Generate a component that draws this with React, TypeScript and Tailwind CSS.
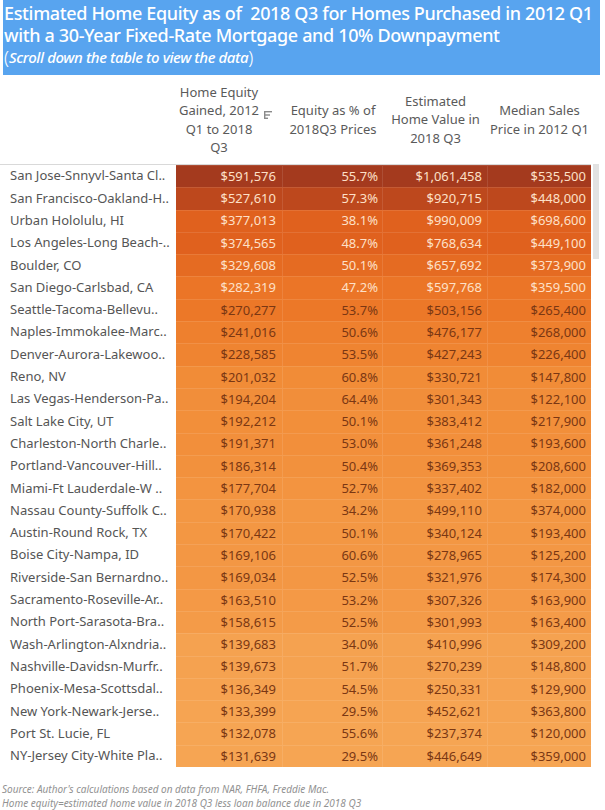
import React from "react"

type Row = [string, number, string, string, string]

const rows: Row[] = [
    ["San Jose-Snnyvl-Santa Cl..", 591576, "55.7%", "$1,061,458", "$535,500"],
    ["San Francisco-Oakland-H..", 527610, "57.3%", "$920,715", "$448,000"],
    ["Urban Hololulu, HI", 377013, "38.1%", "$990,009", "$698,600"],
    ["Los Angeles-Long Beach-..", 374565, "48.7%", "$768,634", "$449,100"],
    ["Boulder, CO", 329608, "50.1%", "$657,692", "$373,900"],
    ["San Diego-Carlsbad, CA", 282319, "47.2%", "$597,768", "$359,500"],
    ["Seattle-Tacoma-Bellevu..", 270277, "53.7%", "$503,156", "$265,400"],
    ["Naples-Immokalee-Marc..", 241016, "50.6%", "$476,177", "$268,000"],
    ["Denver-Aurora-Lakewoo..", 228585, "53.5%", "$427,243", "$226,400"],
    ["Reno, NV", 201032, "60.8%", "$330,721", "$147,800"],
    ["Las Vegas-Henderson-Pa..", 194204, "64.4%", "$301,343", "$122,100"],
    ["Salt Lake City, UT", 192212, "50.1%", "$383,412", "$217,900"],
    ["Charleston-North Charle..", 191371, "53.0%", "$361,248", "$193,600"],
    ["Portland-Vancouver-Hill..", 186314, "50.4%", "$369,353", "$208,600"],
    ["Miami-Ft Lauderdale-W ..", 177704, "52.7%", "$337,402", "$182,000"],
    ["Nassau County-Suffolk C..", 170938, "34.2%", "$499,110", "$374,000"],
    ["Austin-Round Rock, TX", 170422, "50.1%", "$340,124", "$193,400"],
    ["Boise City-Nampa, ID", 169106, "60.6%", "$278,965", "$125,200"],
    ["Riverside-San Bernardno..", 169034, "52.5%", "$321,976", "$174,300"],
    ["Sacramento-Roseville-Ar..", 163510, "53.2%", "$307,326", "$163,900"],
    ["North Port-Sarasota-Bra..", 158615, "52.5%", "$301,993", "$163,400"],
    ["Wash-Arlington-Alxndria..", 139683, "34.0%", "$410,996", "$309,200"],
    ["Nashville-Davidsn-Murfr..", 139673, "51.7%", "$270,239", "$148,800"],
    ["Phoenix-Mesa-Scottsdal..", 136349, "54.5%", "$250,331", "$129,900"],
    ["New York-Newark-Jerse..", 133399, "29.5%", "$452,621", "$363,800"],
    ["Port St. Lucie, FL", 132078, "55.6%", "$237,374", "$120,000"],
    ["NY-Jersey City-White Pla..", 131639, "29.5%", "$446,649", "$359,000"],
]

// orange sequential ramp, light -> dark
const stops: [number, number[]][] = [
    [0, [246, 165, 83]],
    [0.15, [241, 140, 55]],
    [0.3, [236, 120, 40]],
    [0.53, [224, 97, 30]],
    [0.86, [189, 72, 29]],
    [1, [164, 58, 30]],
]

const MIN = 131639
const MAX = 591576

const colorFor = (v: number) => {
    const t = (v - MIN) / (MAX - MIN)
    for (let i = 1; i < stops.length; i++) {
        const [t1, c1] = stops[i]
        const [t0, c0] = stops[i - 1]
        if (t <= t1) {
            const k = (t - t0) / (t1 - t0)
            const c = c0.map((x, j) => Math.round(x + (c1[j] - x) * k))
            return `rgb(${c[0]},${c[1]},${c[2]})`
        }
    }
    return "rgb(164,58,30)"
}

const fmt = (v: number) => "$" + v.toLocaleString("en-US")

const SortIcon = () => (
    <svg width="8" height="10" viewBox="0 0 8 10" className="shrink-0">
        <rect x="0" y="1" width="1.4" height="8" fill="#8a8a8a" />
        <rect x="0" y="1" width="8" height="1.4" fill="#8a8a8a" />
        <rect x="0" y="4.3" width="6" height="1.4" fill="#8a8a8a" />
        <rect x="0" y="7.6" width="4" height="1.4" fill="#8a8a8a" />
    </svg>
)

const App = () => {
    return (
        <div
            className="relative w-[605px] h-[810px] bg-white overflow-hidden"
            style={{ fontFamily: '"Noto Sans", "Open Sans", sans-serif' }}
        >
            {/* Title banner */}
            <div className="ml-[3px] w-[597px] h-[75px] bg-[#58a4ef] text-white pl-[1px] pt-[2px]">
                <div className="text-[18px] leading-[22px] font-medium tracking-[-0.35px]">
                    Estimated Home Equity as of&nbsp; 2018 Q3 for Homes Purchased in 2012 Q1
                </div>
                <div className="text-[18px] leading-[22px] font-medium tracking-[-0.35px]">
                    with a 30-Year Fixed-Rate Mortgage and 10% Downpayment
                </div>
                <div className="flex items-center h-[22px]">
                    <span className="text-[18px] leading-[22px] font-light">(</span>
                    <span className="text-[15px] leading-[20px] italic font-medium tracking-[-0.4px]">Scroll down the table to view the data</span>
                    <span className="text-[18px] leading-[22px] font-light">)</span>
                </div>
            </div>

            {/* Column headers */}
            <div className="flex items-center h-[89px] text-[13px] leading-[18.5px] text-[#5a5a5a]">
                <div className="w-[176px]" />
                <div className="w-[107px] flex items-center pl-[2px]">
                    <div className="w-[82px] text-center">Home Equity Gained, 2012 Q1 to 2018 Q3</div>
                    <div className="ml-[4px] -mt-[10px]"><SortIcon /></div>
                </div>
                <div className="w-[100px] text-center">Equity as % of 2018Q3 Prices</div>
                <div className="w-[105px] text-center px-[4px]">Estimated Home Value in 2018 Q3</div>
                <div className="w-[103px] text-center">Median Sales Price in 2012 Q1</div>
            </div>

            {/* Table */}
            <div className="w-[591px] border-t border-[#d9d9d9] text-[13px]">
                {rows.map(([name, eq, pct, val, price], i) => {
                    const light = eq > 275000
                    return (
                        <div key={i} className="flex h-[22.3px] items-center">
                            <div className="w-[176px] pl-[10px] text-[#555] whitespace-nowrap overflow-hidden">{name}</div>
                            <div
                                className={`flex flex-1 h-full border-t border-white/10 ${light ? "text-[#fde0c8]" : "text-[#7a3713]"}`}
                                style={{ backgroundColor: colorFor(eq) }}
                            >
                                <div className="w-[107px] flex items-center justify-end pr-[6px] border-r border-white/10">{fmt(eq)}</div>
                                <div className="w-[100px] flex items-center justify-end pr-[4px] border-r border-white/10">{pct}</div>
                                <div className="w-[105px] flex items-center justify-end pr-[5px] border-r border-white/10">{val}</div>
                                <div className="flex-1 flex items-center justify-end pr-[5px]">{price}</div>
                            </div>
                        </div>
                    )
                })}
            </div>

            {/* scrollbar thumb */}
            <div className="absolute left-[593px] top-[164px] w-[6px] h-[95px] bg-[#e2e2e2]" />

            {/* Footer */}
            <div className="mt-[15px] pl-[2px] text-[10px] leading-[14px] italic text-[#929292]">
                <div>Source: Author's calculations based on data from NAR, FHFA, Freddie Mac.</div>
                <div>Home equity=estimated home value in 2018 Q3 less loan balance due in 2018 Q3</div>
            </div>
        </div>
    )
}

export default App
